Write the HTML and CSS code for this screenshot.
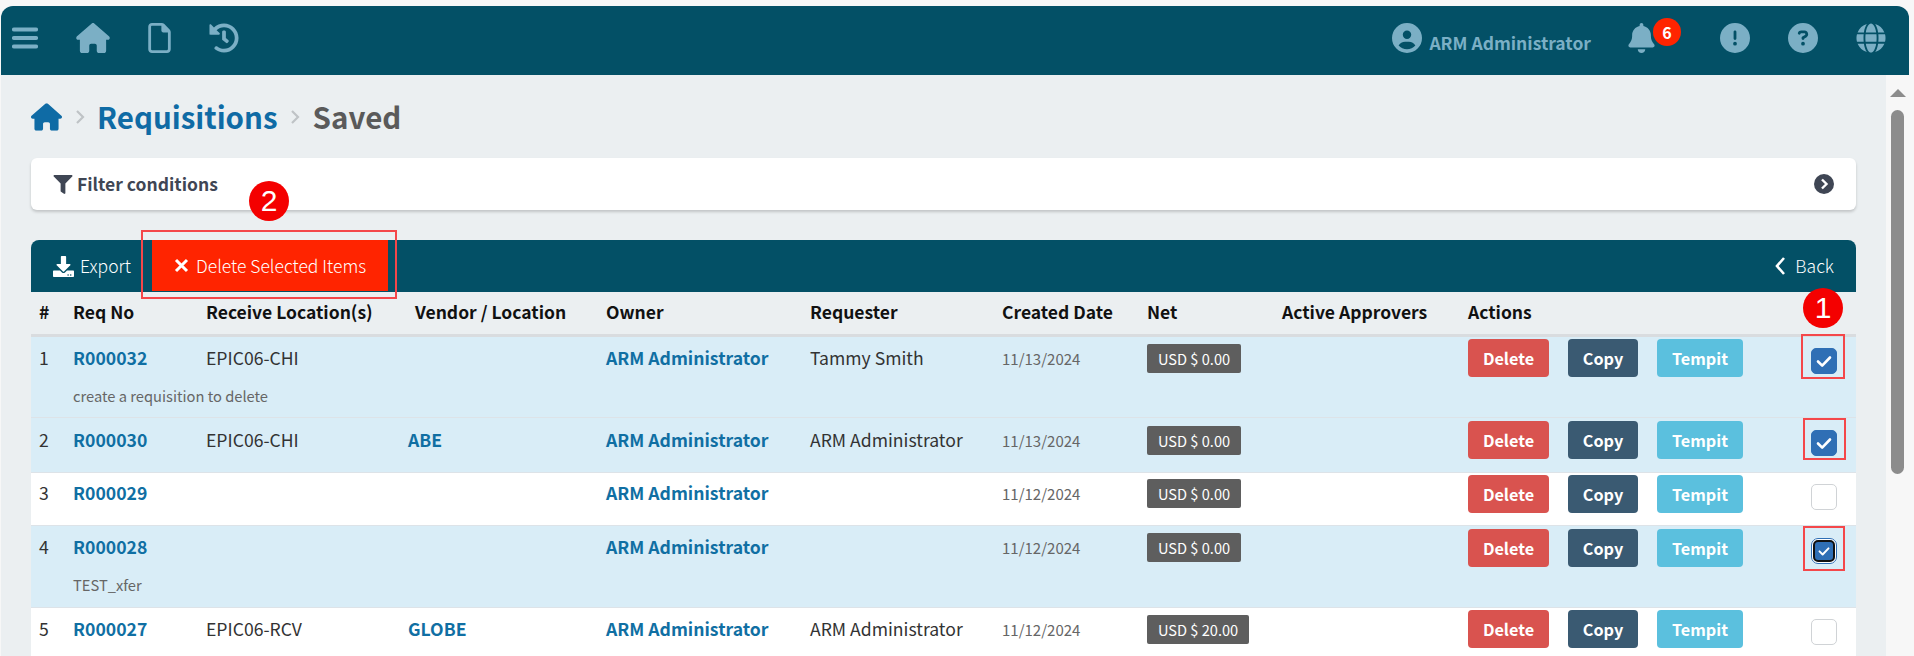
FILE: index.html
```html
<!DOCTYPE html>
<html lang="en">
<head>
<meta charset="utf-8">
<title>Requisitions - Saved</title>
<link rel="stylesheet" href="styles.css">
</head>
<body>
<svg class="defs" aria-hidden="true">
  <symbol id="i-home" viewBox="0 0 576 512"><path d="M575.800 255.500c0 18-15 32.100-32 32.100h-32l.7 160.200c0 2.700-.2 5.400-.5 8.100V472c0 22.100-17.900 40-40 40H456c-1.100 0-2.200 0-3.300-.1c-1.400 .1-2.800 .1-4.200 .1H416 392c-22.100 0-40-17.900-40-40V448 384c0-17.700-14.300-32-32-32H256c-17.700 0-32 14.300-32 32v64 24c0 22.100-17.900 40-40 40H160 128.100c-1.500 0-3-.1-4.500-.2c-1.200 .1-2.400 .2-3.600 .2H104c-22.100 0-40-17.900-40-40V360c0-.9 0-1.900 .1-2.800V287.600H32c-18 0-32-14-32-32.100c0-9 3-17 10-24L266.400 8c7-7 15-8 22-8s15 2 21 7L564.800 231.500c8 7 12 15 11 24z"/></symbol>
  <symbol id="i-check" viewBox="0 0 24 24"><path d="M6 12.500l4.200 4.200L18 8.500" fill="none" stroke="#fff" stroke-width="2.600" stroke-linecap="round" stroke-linejoin="round"/></symbol>
</svg>
<div class="shell">
  <header class="topbar">
    <div class="nav-left">
      <svg class="ico ico-menu" viewBox="0 0 26 22"><path d="M2 2.500h22M2 11h22M2 19.500h22" fill="none" stroke="currentColor" stroke-width="4.200" stroke-linecap="round"/></svg>
      <svg class="ico ico-home" viewBox="0 0 576 512"><use href="#i-home"/></svg>
      <svg class="ico ico-doc" viewBox="0 0 384 512"><path d="M320 464c8.800 0 16-7.200 16-16V160H256c-17.700 0-32-14.300-32-32V48H64c-8.800 0-16 7.200-16 16V448c0 8.800 7.200 16 16 16H320zM0 64C0 28.700 28.700 0 64 0H229.500c17 0 33.300 6.700 45.300 18.700l90.500 90.500c12 12 18.700 28.300 18.700 45.300V448c0 35.300-28.700 64-64 64H64c-35.300 0-64-28.700-64-64V64z"/></svg>
      <svg class="ico ico-round" viewBox="0 0 512 512"><path d="M504 255.531c.253 136.64-111.18 248.372-247.82 248.468-59.015.042-113.223-20.53-155.822-54.911-11.077-8.94-11.905-25.541-1.839-35.607l11.267-11.267c8.609-8.609 22.353-9.551 31.891-1.984C173.062 425.135 212.781 440 256 440c101.705 0 184-82.311 184-184 0-101.705-82.311-184-184-184-48.814 0-93.149 18.969-126.068 49.932l50.754 50.754c10.08 10.08 2.941 27.314-11.313 27.314H24c-8.837 0-16-7.163-16-16V38.627c0-14.254 17.234-21.393 27.314-11.314l49.372 49.372C129.209 34.136 189.552 8 256 8c136.81 0 247.747 110.78 248 247.531zm-180.912 78.784l9.823-12.63c8.138-10.463 6.253-25.542-4.21-33.679L288 256.349V152c0-13.255-10.745-24-24-24h-16c-13.255 0-24 10.745-24 24v135.651l65.409 50.874c10.463 8.137 25.541 6.253 33.679-4.21z"/></svg>
    </div>
    <div class="nav-right">
      <svg class="ico ico-round" viewBox="0 0 512 512"><path d="M399 384.200C376.900 345.800 335.400 320 288 320H224c-47.400 0-88.900 25.800-111 64.200c35.200 39.200 86.200 63.800 143 63.800s107.800-24.700 143-63.800zM0 256a256 256 0 1 1 512 0A256 256 0 1 1 0 256zm256 16a72 72 0 1 0 0-144 72 72 0 1 0 0 144z"/></svg>
      <span class="user-name">ARM Administrator</span>
      <span class="bell">
        <svg class="ico ico-bell" viewBox="0 0 448 512"><path d="M224 0c-17.700 0-32 14.300-32 32V51.200C119 66 64 130.600 64 208v18.800c0 47-17.300 92.400-48.500 127.600l-7.400 8.300c-8.400 9.400-10.400 22.900-5.300 34.400S19.400 416 32 416H416c12.600 0 24-7.400 29.200-18.900s3.100-25-5.300-34.400l-7.400-8.300C401.300 319.200 384 273.900 384 226.800V208c0-77.400-55-142-128-156.800V32c0-17.700-14.300-32-32-32zm45.300 493.300c12-12 18.700-28.300 18.700-45.300H224 160c0 17 6.700 33.300 18.700 45.300s28.300 18.700 45.300 18.700s33.300-6.700 45.300-18.700z"/></svg>
        <span class="bell-count">6</span>
      </span>
      <svg class="ico ico-round ico-alert" viewBox="0 0 512 512"><path d="M256 512A256 256 0 1 0 256 0a256 256 0 1 0 0 512zm0-384c13.300 0 24 10.700 24 24V264c0 13.300-10.700 24-24 24s-24-10.700-24-24V152c0-13.300 10.700-24 24-24zM224 352a32 32 0 1 1 64 0 32 32 0 1 1 -64 0z"/></svg>
      <svg class="ico ico-round" viewBox="0 0 512 512"><path d="M256 512A256 256 0 1 0 256 0a256 256 0 1 0 0 512zM169.800 165.300c7.900-22.300 29.100-37.300 52.800-37.300h58.300c34.900 0 63.100 28.300 63.100 63.100c0 22.600-12.100 43.500-31.700 54.800L280 264.400c-.2 13-10.900 23.600-24 23.600c-13.300 0-24-10.700-24-24V250.500c0-8.600 4.600-16.500 12.100-20.800l44.300-25.400c4.700-2.700 7.600-7.700 7.600-13.100c0-8.400-6.800-15.100-15.100-15.100H222.600c-3.400 0-6.400 2.100-7.500 5.300l-.4 1.200c-4.400 12.500-18.200 19-30.600 14.600s-19-18.200-14.600-30.600l.4-1.200zM224 352a32 32 0 1 1 64 0 32 32 0 1 1 -64 0z"/></svg>
      <svg class="ico ico-round" viewBox="0 0 496 512"><path d="M336.500 160C322 70.700 287.800 8 248 8s-74 62.700-88.500 152h177zM152 256c0 22.200 1.200 43.500 3.300 64h185.300c2.100-20.500 3.300-41.800 3.300-64s-1.200-43.500-3.300-64H155.300c-2.100 20.500-3.300 41.800-3.300 64zm324.700-96c-28.600-67.900-86.500-120.400-158-141.600 24.400 33.800 41.200 84.700 50 141.600h108zM177.200 18.400C105.800 39.600 47.800 92.100 19.300 160h108c8.700-56.900 25.500-107.800 49.900-141.600zM487.400 192H372.700c2.100 21 3.300 42.500 3.300 64s-1.200 43-3.300 64h114.600c5.500-20.500 8.600-41.800 8.600-64s-3.100-43.500-8.500-64zM120 256c0-21.500 1.200-43 3.300-64H8.600C3.200 212.500 0 233.800 0 256s3.200 43.500 8.600 64h114.600c-2-21-3.200-42.500-3.200-64zm39.500 96c14.500 89.300 48.700 152 88.500 152s74-62.700 88.500-152h-177zm159.300 141.600c71.400-21.200 129.400-73.700 158-141.600h-108c-8.800 56.900-25.600 107.800-50 141.600zM19.300 352c28.600 67.900 86.500 120.400 158 141.600-24.400-33.800-41.200-84.700-50-141.600h-108z"/></svg>
    </div>
  </header>

  <div class="workspace">
    <main class="content">
      <nav class="crumbs">
        <svg class="crumb-home" viewBox="0 0 576 512"><use href="#i-home"/></svg>
        <svg class="crumb-sep" viewBox="0 0 10 16"><path d="M2 2l6 6-6 6" fill="none" stroke="currentColor" stroke-width="2.200"/></svg>
        <a class="crumb-link">Requisitions</a>
        <svg class="crumb-sep crumb-sep-2" viewBox="0 0 10 16"><path d="M2 2l6 6-6 6" fill="none" stroke="currentColor" stroke-width="2.200"/></svg>
        <span class="crumb-current">Saved</span>
      </nav>

      <section class="filter-card">
        <div class="filter-title">
          <svg class="filter-ico" viewBox="0 0 512 512"><path d="M487.976 0H24.028C2.710 0-8.047 25.866 7.058 40.971L192 225.941V432c0 7.831 3.821 15.170 10.237 19.662l80 55.980C298.020 518.690 320 507.493 320 487.980V225.941l184.947-184.970C520.021 25.896 509.338 0 487.976 0z"/></svg>
          <span>Filter conditions</span>
        </div>
        <svg class="filter-toggle" viewBox="0 0 20 20"><circle cx="10" cy="10" r="10" fill="#3f4654"/><path d="M8 5.500l4.500 4.500L8 14.500" fill="none" stroke="#fff" stroke-width="2.400"/></svg>
      </section>

      <section class="panel">
        <div class="toolbar">
          <a class="tool tool-export">
            <svg class="tool-ico" viewBox="0 0 512 512"><path d="M216 0h80c13.300 0 24 10.700 24 24v168h87.700c17.800 0 26.700 21.500 14.100 34.100L269.700 378.300c-7.500 7.500-19.800 7.500-27.300 0L90.100 226.100c-12.600-12.600-3.700-34.100 14.100-34.100H192V24c0-13.300 10.700-24 24-24zm296 376v112c0 13.300-10.700 24-24 24H24c-13.300 0-24-10.700-24-24V376c0-13.300 10.700-24 24-24h146.700l49 49c20.100 20.100 52.500 20.100 72.600 0l49-49H488c13.300 0 24 10.700 24 24zm-124 88c0-11-9-20-20-20s-20 9-20 20 9 20 20 20 20-9 20-20zm64 0c0-11-9-20-20-20s-20 9-20 20 9 20 20 20 20-9 20-20z"/></svg>
            Export
          </a>
          <a class="tool tool-delete">
            <svg class="tool-x" viewBox="0 0 15 15"><path d="M2 2l11 11M13 2L2 13" fill="none" stroke="#fff" stroke-width="3"/></svg>
            Delete Selected Items
          </a>
          <a class="tool tool-back">
            <svg class="tool-chev" viewBox="0 0 11 20"><path d="M9 2L2 10l7 8" fill="none" stroke="#fff" stroke-width="2.600"/></svg>
            Back
          </a>
        </div>

        <table class="grid">
          <colgroup>
            <col class="c-num"><col class="c-req"><col class="c-loc"><col class="c-ven"><col class="c-own"><col class="c-rqr"><col class="c-date"><col class="c-net"><col class="c-appr"><col class="c-act"><col class="c-chk">
          </colgroup>
          <thead>
            <tr>
              <th>#</th><th>Req No</th><th>Receive Location(s)</th><th class="th-vendor">Vendor / Location</th><th>Owner</th><th>Requester</th><th>Created Date</th><th>Net</th><th>Active Approvers</th><th>Actions</th><th></th>
            </tr>
          </thead>
          <tbody>
            <tr class="sel row-1">
              <td>1</td>
              <td><a class="lnk">R000032</a><div class="note">create a requisition to delete</div></td>
              <td>EPIC06-CHI</td><td></td>
              <td><a class="lnk">ARM Administrator</a></td>
              <td>Tammy Smith</td>
              <td class="date">11/13/2024</td>
              <td class="amount"><span class="net">USD $ 0.00</span></td><td></td>
              <td class="acts"><div class="btns"><a class="btn b-del">Delete</a><a class="btn b-copy">Copy</a><a class="btn b-temp">Tempit</a></div></td>
              <td class="chk"><span class="box on"><svg viewBox="0 0 24 24"><use href="#i-check"/></svg></span></td>
            </tr>
            <tr class="sel row-2">
              <td>2</td>
              <td><a class="lnk">R000030</a></td>
              <td>EPIC06-CHI</td>
              <td><a class="lnk">ABE</a></td>
              <td><a class="lnk">ARM Administrator</a></td>
              <td>ARM Administrator</td>
              <td class="date">11/13/2024</td>
              <td class="amount"><span class="net">USD $ 0.00</span></td><td></td>
              <td class="acts"><div class="btns"><a class="btn b-del">Delete</a><a class="btn b-copy">Copy</a><a class="btn b-temp">Tempit</a></div></td>
              <td class="chk"><span class="box on"><svg viewBox="0 0 24 24"><use href="#i-check"/></svg></span></td>
            </tr>
            <tr class="row-3">
              <td>3</td>
              <td><a class="lnk">R000029</a></td>
              <td></td><td></td>
              <td><a class="lnk">ARM Administrator</a></td>
              <td></td>
              <td class="date">11/12/2024</td>
              <td class="amount"><span class="net">USD $ 0.00</span></td><td></td>
              <td class="acts"><div class="btns"><a class="btn b-del">Delete</a><a class="btn b-copy">Copy</a><a class="btn b-temp">Tempit</a></div></td>
              <td class="chk"><span class="box"></span></td>
            </tr>
            <tr class="sel row-4">
              <td>4</td>
              <td><a class="lnk">R000028</a><div class="note">TEST_xfer</div></td>
              <td></td><td></td>
              <td><a class="lnk">ARM Administrator</a></td>
              <td></td>
              <td class="date">11/12/2024</td>
              <td class="amount"><span class="net">USD $ 0.00</span></td><td></td>
              <td class="acts"><div class="btns"><a class="btn b-del">Delete</a><a class="btn b-copy">Copy</a><a class="btn b-temp">Tempit</a></div></td>
              <td class="chk"><span class="box on focus"><svg viewBox="0 0 24 24"><use href="#i-check"/></svg></span></td>
            </tr>
            <tr class="row-5">
              <td>5</td>
              <td><a class="lnk">R000027</a></td>
              <td>EPIC06-RCV</td>
              <td><a class="lnk">GLOBE</a></td>
              <td><a class="lnk">ARM Administrator</a></td>
              <td>ARM Administrator</td>
              <td class="date">11/12/2024</td>
              <td class="amount"><span class="net">USD $ 20.00</span></td><td></td>
              <td class="acts"><div class="btns"><a class="btn b-del">Delete</a><a class="btn b-copy">Copy</a><a class="btn b-temp">Tempit</a></div></td>
              <td class="chk"><span class="box"></span></td>
            </tr>
          </tbody>
        </table>
      </section>
    </main>
    <aside class="scrollbar">
      <span class="scroll-up"></span>
      <span class="scroll-thumb"></span>
    </aside>
  </div>
</div>

<span class="mark mark-delete"></span>
<span class="mark mark-row1"></span>
<span class="mark mark-row2"></span>
<span class="mark mark-row4"></span>
<span class="step step-1">1</span>
<span class="step step-2">2</span>
</body>
</html>
```

FILE: styles.css
```css
* { box-sizing: border-box; }

html, body {
  margin: 0;
  height: 656px;
  overflow: hidden;
}

body {
  position: relative;
  background: #f7f7f7;
  font-family: "Noto Sans CJK JP", "Noto Sans", sans-serif;
  font-size: 17.6px;
  line-height: 24px;
  color: #333;
}

.defs { display: none; }

.shell {
  width: 1909px;
  height: 650px;
  margin-top: 6px;
  padding-left: 1px;
}

.topbar {
  height: 69px;
  display: flex;
  align-items: center;
  justify-content: space-between;
  background: #035066;
  border-radius: 12px 12px 0 0;
  color: #7bafc5;
  padding: 0 23px 6px 11px;
}

.nav-left, .nav-right { display: flex; align-items: center; }
.nav-left { gap: 38px; }

.ico { display: block; height: 30px; fill: currentColor; flex: none; }
.ico-menu { width: 26px; height: 22px; }
.ico-home { width: 34px; }
.ico-doc { width: 23px; }
.ico-round { width: 30px; }
.ico-bell { width: 27px; }
.nav-right .ico-round + .ico-round { margin-left: 38px; }
.nav-right .ico-alert { margin-left: 65px; }

.user-name {
  margin-left: 7px;
  font-size: 17.5px;
  font-weight: 700;
  position: relative;
  top: 5px;
}

.bell { position: relative; margin-left: 37px; }

.bell-count {
  position: absolute;
  left: 25px;
  top: -5px;
  width: 28px;
  height: 28px;
  border-radius: 50%;
  background: #ff2400;
  color: #fff;
  font-size: 16px;
  font-weight: 700;
  line-height: 28px;
  text-align: center;
}

.workspace {
  display: flex;
  height: 581px;
}

.content {
  flex: 1;
  min-width: 0;
  padding: 20px 30px 0;
  background: #ebeff1;
  overflow: hidden;
}

.scrollbar {
  width: 23px;
  flex: none;
  background: #f7f7f7;
  padding-top: 14px;
  display: flex;
  flex-direction: column;
  align-items: center;
}

.scroll-up {
  width: 0;
  height: 0;
  border-left: 8px solid transparent;
  border-right: 8px solid transparent;
  border-bottom: 8px solid #8c8c8c;
}

.scroll-thumb {
  width: 13px;
  height: 364px;
  margin-top: 13px;
  border-radius: 7px;
  background: #8c8c8c;
}

.crumbs {
  height: 44px;
  display: flex;
  align-items: center;
}

.crumb-home { width: 31px; height: 28px; fill: #0f6ba5; }
.crumb-sep { width: 10px; height: 16px; margin: 0 12px 0 13px; color: #bfc3c6; }
.crumb-sep-2 { margin: 0 13px 0 12px; }
.crumb-link, .crumb-current { margin-top: -2px; font-size: 29.5px; font-weight: 700; }
.crumb-link { color: #0f6ba5; }
.crumb-current { color: #5a5a5a; }

.filter-card {
  height: 52px;
  margin-top: 19px;
  display: flex;
  align-items: center;
  justify-content: space-between;
  padding: 0 22px;
  background: #fff;
  border-radius: 6px;
  box-shadow: 0 2px 3px rgba(0, 0, 0, .18);
}

.filter-title {
  display: flex;
  align-items: center;
  gap: 4px;
  font-size: 17.5px;
  font-weight: 700;
  color: #3f4654;
}

.filter-ico { width: 20px; height: 19px; fill: #3f4654; }
.filter-toggle { width: 20px; height: 20px; }

.panel { margin-top: 30px; }

.toolbar {
  height: 52px;
  display: flex;
  background: #035066;
  border-radius: 8px 8px 0 0;
  color: #fff;
  font-size: 17.5px;
  font-weight: 300;
  white-space: nowrap;
}

.tool { display: flex; align-items: center; }
.tool-export { padding: 0 21px 0 22px; gap: 6px; }
.tool-ico { width: 21px; height: 21px; fill: #fff; }
.tool-delete { height: 51px; width: 236px; padding-left: 22px; gap: 7px; background: #ff2400; }
.tool-x { width: 15px; height: 15px; }
.tool-back { margin-left: auto; padding-right: 22px; gap: 9px; }
.tool-chev { width: 11px; height: 20px; }

.grid {
  width: 100%;
  table-layout: fixed;
  border-collapse: separate;
  border-spacing: 0;
}

.c-num { width: 34px; }
.c-req { width: 133px; }
.c-loc { width: 202px; }
.c-ven { width: 198px; }
.c-own { width: 204px; }
.c-rqr { width: 192px; }
.c-date { width: 145px; }
.c-net { width: 135px; }
.c-appr { width: 186px; }
.c-act { width: 300px; }
.c-chk { width: 96px; }

.grid th {
  height: 45px;
  padding: 0 0 3px 8px;
  border-bottom: 3px solid #d9dcdf;
  text-align: left;
  font-size: 17.5px;
  font-weight: 700;
  color: #111;
  white-space: nowrap;
}

.grid th.th-vendor { padding-left: 15px; }

.row-1 { --row-h: 81px; --pad: 9px; --act: 2px; --chk: 11px; }
.row-2 { --row-h: 55px; --pad: 10px; --act: 3px; --chk: 12px; }
.row-3 { --row-h: 53px; --pad: 8px; --act: 2px; --chk: 11px; }
.row-4 { --row-h: 82px; --pad: 9px; --act: 3px; --chk: 12px; }
.row-5 { --row-h: 54px; --pad: 9px; --act: 2px; --chk: 11px; }

.grid td {
  height: var(--row-h);
  vertical-align: top;
  padding: var(--pad) 0 0 8px;
  border-bottom: 1px solid #dde3e8;
  background: #fff;
  white-space: nowrap;
}

.grid tr.sel td { background: #d9edf7; }

.lnk { font-weight: 700; color: #106fa3; }

.note {
  margin-top: 14px;
  font-size: 14.7px;
  color: #666;
}

.grid td.date {
  padding-top: calc(var(--pad) + 1px);
  font-size: 15px;
  color: #666;
}

.grid td.amount { padding-top: calc(var(--pad) - 2px); }

.net {
  display: inline-block;
  height: 29px;
  padding: 0 11px;
  border-radius: 2px;
  background: #5e5e5e;
  color: #fff;
  font-size: 14.6px;
  line-height: 29px;
  vertical-align: top;
}

.grid td.acts { padding-top: var(--act); }

.btns { display: flex; gap: 19px; }

.btn {
  height: 38px;
  border-radius: 4px;
  color: #fff;
  font-size: 16.2px;
  font-weight: 700;
  line-height: 38px;
  text-align: center;
}

.b-del { width: 81px; background: #d9534f; }
.b-copy { width: 70px; background: #3a5a72; }
.b-temp { width: 86px; background: #5bc0de; }

.grid td.chk { padding-left: 51px; padding-top: var(--chk); }

.box {
  display: block;
  width: 26px;
  height: 26px;
  border: 1px solid #d0d3d6;
  border-radius: 5px;
  background: #fff;
}

.box.on { border-color: #2f6fb5; background: #2f6fb5; }
.box svg { display: block; width: 24px; height: 24px; }

.box.focus {
  border: 2px solid #111;
  outline: 1px solid #2f6fb5;
  outline-offset: 1px;
  box-shadow: 0 0 0 2px #fff;
  width: 22px;
  height: 22px;
  margin: 2px;
}

.box.focus svg { width: 18px; height: 18px; }

.mark {
  position: absolute;
  border: 2px solid #f4474a;
}

.mark-delete { left: 141px; top: 230px; width: 256px; height: 69px; }
.mark-row1 { left: 1801px; top: 334px; width: 44px; height: 45px; }
.mark-row2 { left: 1803px; top: 418px; width: 43px; height: 42px; }
.mark-row4 { left: 1803px; top: 526px; width: 42px; height: 45px; }

.step {
  position: absolute;
  width: 40px;
  height: 40px;
  border-radius: 50%;
  background: #f40000;
  color: #fff;
  font-family: "Liberation Sans", Arial, sans-serif;
  font-size: 30px;
  line-height: 40px;
  text-align: center;
}

.step-1 { left: 1803px; top: 288px; }
.step-2 { left: 249px; top: 181px; }
```
